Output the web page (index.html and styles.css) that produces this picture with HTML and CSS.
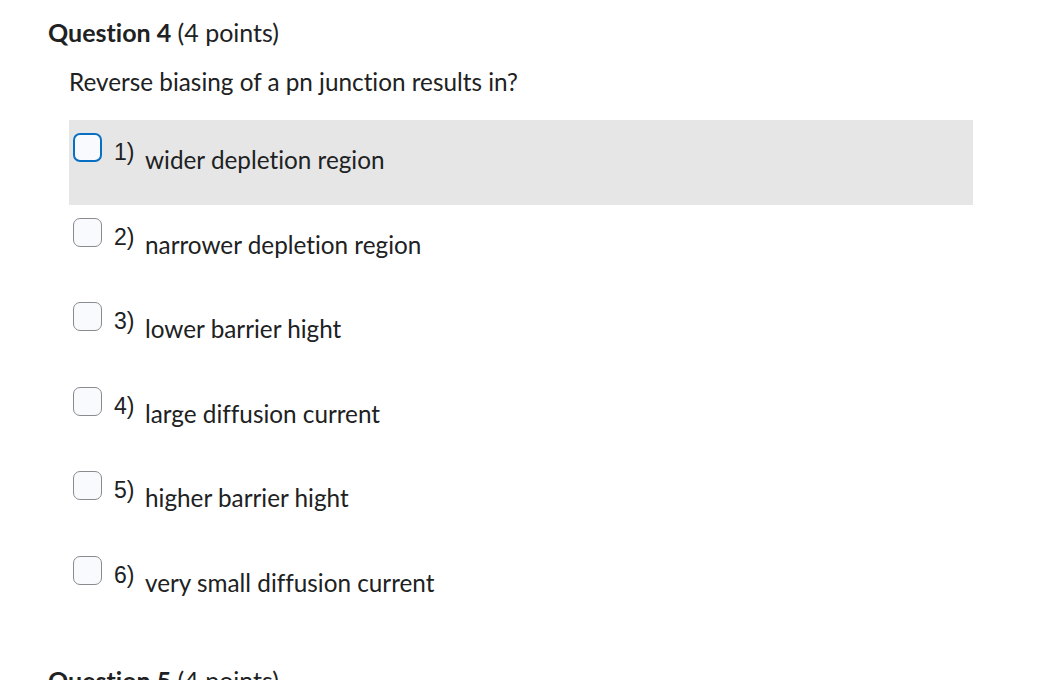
FILE: index.html
```html
<!DOCTYPE html>
<html>
<head>
<meta charset="utf-8">
<link rel="stylesheet" href="styles.css">
</head>
<body>
<div class="page">
  <h2 class="q-title"><strong>Question 4</strong> (4 points)</h2>
  <p class="q-text">Reverse biasing of a pn junction results in?</p>
  <div class="options">
    <div class="option hover">
      <span class="box focus"></span>
      <span class="num">1)</span>
      <span class="label">wider depletion region</span>
    </div>
    <div class="option">
      <span class="box"></span>
      <span class="num">2)</span>
      <span class="label">narrower depletion region</span>
    </div>
    <div class="option">
      <span class="box"></span>
      <span class="num">3)</span>
      <span class="label">lower barrier hight</span>
    </div>
    <div class="option">
      <span class="box"></span>
      <span class="num">4)</span>
      <span class="label">large diffusion current</span>
    </div>
    <div class="option">
      <span class="box"></span>
      <span class="num">5)</span>
      <span class="label">higher barrier hight</span>
    </div>
    <div class="option">
      <span class="box"></span>
      <span class="num">6)</span>
      <span class="label">very small diffusion current</span>
    </div>
  </div>
  <h2 class="q-title next"><strong>Question 5</strong> (4 points)</h2>
</div>
</body>
</html>
```

FILE: styles.css
```css
html, body {
  margin: 0;
  padding: 0;
  background: #ffffff;
}
body {
  font-family: Lato, "Liberation Sans", sans-serif;
  font-variant-ligatures: none;
  color: #202122;
  overflow: hidden;
  height: 680px;
}
.page {
  padding: 16px 0 0 48px;
}
.q-title {
  margin: 0;
  font-size: 25px;
  font-weight: 400;
  line-height: 32px;
}
.q-title strong {
  font-weight: 700;
}
.q-text {
  margin: 18px 0 0 21px;
  font-size: 24.3px;
  line-height: 32px;
}
.options {
  margin: 22px 0 0 21px;
  width: 904px;
}
.option {
  display: flex;
  align-items: flex-start;
  height: 84.6px;
  box-sizing: border-box;
  padding: 13px 4px 0;
}
.option.hover {
  background: #e6e6e6;
}
.box {
  width: 29px;
  height: 29px;
  box-sizing: border-box;
  border: 1px solid #8a8b8f;
  border-radius: 7px;
  background: #f9fafe;
  flex: none;
}
.box.focus {
  border: 2px solid #0770c4;
}
.num {
  font-family: "Liberation Sans", Arial, sans-serif;
  font-size: 23px;
  line-height: 24px;
  margin: 7px 0 0 12px;
  width: 31px;
  flex: none;
}
.label {
  font-size: 24.3px;
  line-height: 32px;
  margin-top: 11px;
}
.q-title.next {
  margin-top: 36px;
}
```
